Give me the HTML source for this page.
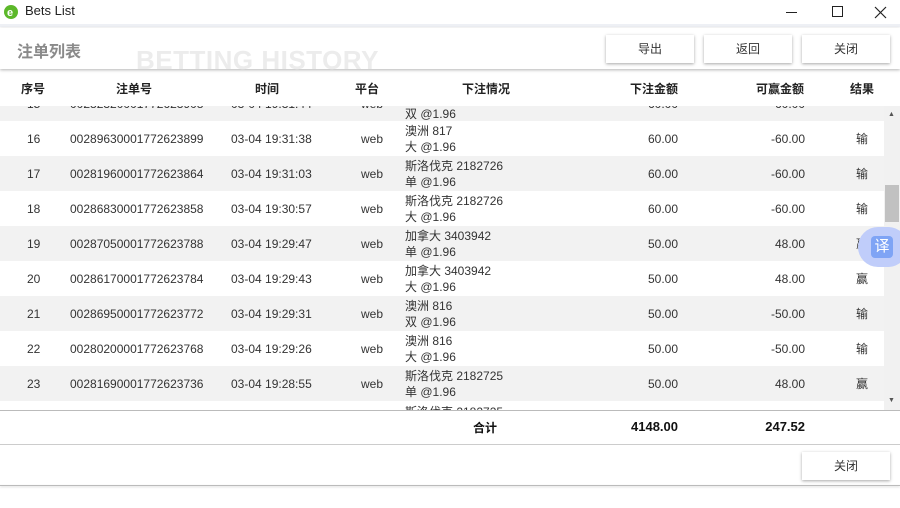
<!DOCTYPE html><html><head><meta charset="utf-8"><style>
*{margin:0;padding:0;box-sizing:border-box}
body{width:900px;height:508px;background:#fff;font-family:"Liberation Sans","Noto Sans CJK SC",sans-serif;font-size:12px;color:#333;position:relative;overflow:hidden}
.a{position:absolute;white-space:nowrap}
.btn{position:absolute;width:88px;height:28px;background:#fff;box-shadow:0 1px 3px rgba(0,0,0,.35);text-align:center;line-height:28px;font-size:12px;color:#333}
.row{position:absolute;left:0;width:884px;height:35px}
.row .a{top:11px}
.row .r{top:9px}
.g{background:#f2f2f2}
.hd{font-weight:bold;color:#222;font-size:12px;top:80px}
</style></head><body>
<svg class="a" style="left:3px;top:3px" width="16" height="18" viewBox="0 0 16 18"><circle cx="8" cy="9" r="7" fill="#5cb82a"/><text x="4" y="13" font-size="11" font-weight="bold" fill="#fff" font-family="Liberation Sans">e</text></svg>
<div class="a" style="left:25px;top:3px;font-size:13px;color:#222">Bets List</div>
<div class="a" style="left:786px;top:12px;width:11px;height:1px;background:#222"></div>
<div class="a" style="left:832px;top:6px;width:11px;height:11px;border:1px solid #222"></div>
<svg class="a" style="left:874px;top:6px" width="13" height="13"><path d="M1 1L12 12M12 1L1 12" stroke="#222" stroke-width="1.2"/></svg>
<div class="a" style="left:0;top:24px;width:900px;height:3px;background:#eef0f5"></div>
<div class="a" style="left:0;top:28px;width:900px;height:41px;box-shadow:0 1px 3px rgba(0,0,0,.3);background:#fff"></div>
<div class="a" style="left:136px;top:45px;font-size:26px;font-weight:bold;color:#ececec;letter-spacing:0.5px">BETTING HISTORY</div>
<div class="a" style="left:17px;top:38px;font-size:16px;font-weight:bold;color:#8a8a8a">注单列表</div>
<div class="btn" style="left:606px;top:35px">导出</div>
<div class="btn" style="left:704px;top:35px">返回</div>
<div class="btn" style="left:802px;top:35px">关闭</div>
<div class="a hd" style="left:21px">序号</div>
<div class="a hd" style="left:116px">注单号</div>
<div class="a hd" style="left:255px">时间</div>
<div class="a hd" style="left:355px">平台</div>
<div class="a hd" style="left:462px">下注情况</div>
<div class="a hd" style="left:630px">下注金额</div>
<div class="a hd" style="left:756px">可赢金额</div>
<div class="a hd" style="left:850px">结果</div>
<div class="a" style="left:0;top:106px;width:884px;height:304px;overflow:hidden">
<div class="row g" style="top:-20px"><div class="a" style="left:405px;top:19px">双 @1.96</div><div class="a" style="left:27px;top:11px">15</div><div class="a" style="left:70px;top:11px">00282320001772623908</div><div class="a" style="left:231px;top:11px">03-04 19:31:44</div><div class="a" style="left:361px;top:11px">web</div><div class="a" style="right:206px;top:11px">60.00</div><div class="a" style="right:79px;top:11px">-60.00</div></div>
<div class="row" style="top:15px"><div class="a" style="left:27px">16</div><div class="a" style="left:70px">00289630001772623899</div><div class="a" style="left:231px">03-04 19:31:38</div><div class="a" style="left:361px">web</div><div class="a" style="left:405px;top:2px;line-height:16px">澳洲 817<br>大 @1.96</div><div class="a" style="right:206px">60.00</div><div class="a" style="right:79px">-60.00</div><div class="a r" style="left:856px">输</div></div>
<div class="row g" style="top:50px"><div class="a" style="left:27px">17</div><div class="a" style="left:70px">00281960001772623864</div><div class="a" style="left:231px">03-04 19:31:03</div><div class="a" style="left:361px">web</div><div class="a" style="left:405px;top:2px;line-height:16px">斯洛伐克 2182726<br>单 @1.96</div><div class="a" style="right:206px">60.00</div><div class="a" style="right:79px">-60.00</div><div class="a r" style="left:856px">输</div></div>
<div class="row" style="top:85px"><div class="a" style="left:27px">18</div><div class="a" style="left:70px">00286830001772623858</div><div class="a" style="left:231px">03-04 19:30:57</div><div class="a" style="left:361px">web</div><div class="a" style="left:405px;top:2px;line-height:16px">斯洛伐克 2182726<br>大 @1.96</div><div class="a" style="right:206px">60.00</div><div class="a" style="right:79px">-60.00</div><div class="a r" style="left:856px">输</div></div>
<div class="row g" style="top:120px"><div class="a" style="left:27px">19</div><div class="a" style="left:70px">00287050001772623788</div><div class="a" style="left:231px">03-04 19:29:47</div><div class="a" style="left:361px">web</div><div class="a" style="left:405px;top:2px;line-height:16px">加拿大 3403942<br>单 @1.96</div><div class="a" style="right:206px">50.00</div><div class="a" style="right:79px">48.00</div><div class="a r" style="left:856px">赢</div></div>
<div class="row" style="top:155px"><div class="a" style="left:27px">20</div><div class="a" style="left:70px">00286170001772623784</div><div class="a" style="left:231px">03-04 19:29:43</div><div class="a" style="left:361px">web</div><div class="a" style="left:405px;top:2px;line-height:16px">加拿大 3403942<br>大 @1.96</div><div class="a" style="right:206px">50.00</div><div class="a" style="right:79px">48.00</div><div class="a r" style="left:856px">赢</div></div>
<div class="row g" style="top:190px"><div class="a" style="left:27px">21</div><div class="a" style="left:70px">00286950001772623772</div><div class="a" style="left:231px">03-04 19:29:31</div><div class="a" style="left:361px">web</div><div class="a" style="left:405px;top:2px;line-height:16px">澳洲 816<br>双 @1.96</div><div class="a" style="right:206px">50.00</div><div class="a" style="right:79px">-50.00</div><div class="a r" style="left:856px">输</div></div>
<div class="row" style="top:225px"><div class="a" style="left:27px">22</div><div class="a" style="left:70px">00280200001772623768</div><div class="a" style="left:231px">03-04 19:29:26</div><div class="a" style="left:361px">web</div><div class="a" style="left:405px;top:2px;line-height:16px">澳洲 816<br>大 @1.96</div><div class="a" style="right:206px">50.00</div><div class="a" style="right:79px">-50.00</div><div class="a r" style="left:856px">输</div></div>
<div class="row g" style="top:260px"><div class="a" style="left:27px">23</div><div class="a" style="left:70px">00281690001772623736</div><div class="a" style="left:231px">03-04 19:28:55</div><div class="a" style="left:361px">web</div><div class="a" style="left:405px;top:2px;line-height:16px">斯洛伐克 2182725<br>单 @1.96</div><div class="a" style="right:206px">50.00</div><div class="a" style="right:79px">48.00</div><div class="a r" style="left:856px">赢</div></div>
<div class="row" style="top:295px"><div class="a" style="left:405px;top:2px">斯洛伐克 2182725</div></div>
</div>
<div class="a" style="left:884px;top:106px;width:16px;height:304px;background:#f1f1f1"></div>
<div class="a" style="left:888px;top:111px;font-size:7px;color:#555">▲</div>
<div class="a" style="left:888px;top:397px;font-size:7px;color:#555">▼</div>
<div class="a" style="left:885px;top:185px;width:14px;height:37px;background:#c1c1c1"></div>
<div class="a" style="left:858px;top:227px;width:50px;height:40px;border-radius:20px;background:#c0cdfa"></div>
<div class="a" style="left:871px;top:236px;width:22px;height:22px;border-radius:4px;background:#7fa4f5;color:#fff;font-size:15px;text-align:center;line-height:22px">译</div>
<div class="a" style="left:0;top:410px;width:900px;height:1px;background:#bbb"></div>
<div class="a" style="left:473px;top:419px;font-weight:bold;color:#111">合计</div>
<div class="a" style="right:222px;top:419px;font-weight:bold;color:#111;font-size:13px">4148.00</div>
<div class="a" style="right:95px;top:419px;font-weight:bold;color:#111;font-size:13px">247.52</div>
<div class="a" style="left:0;top:444px;width:900px;height:1px;background:#ccc"></div>
<div class="btn" style="left:802px;top:452px">关闭</div>
<div class="a" style="left:0;top:485px;width:900px;height:1px;background:#bbb;box-shadow:0 1px 2px rgba(0,0,0,.2)"></div>
</body></html>
